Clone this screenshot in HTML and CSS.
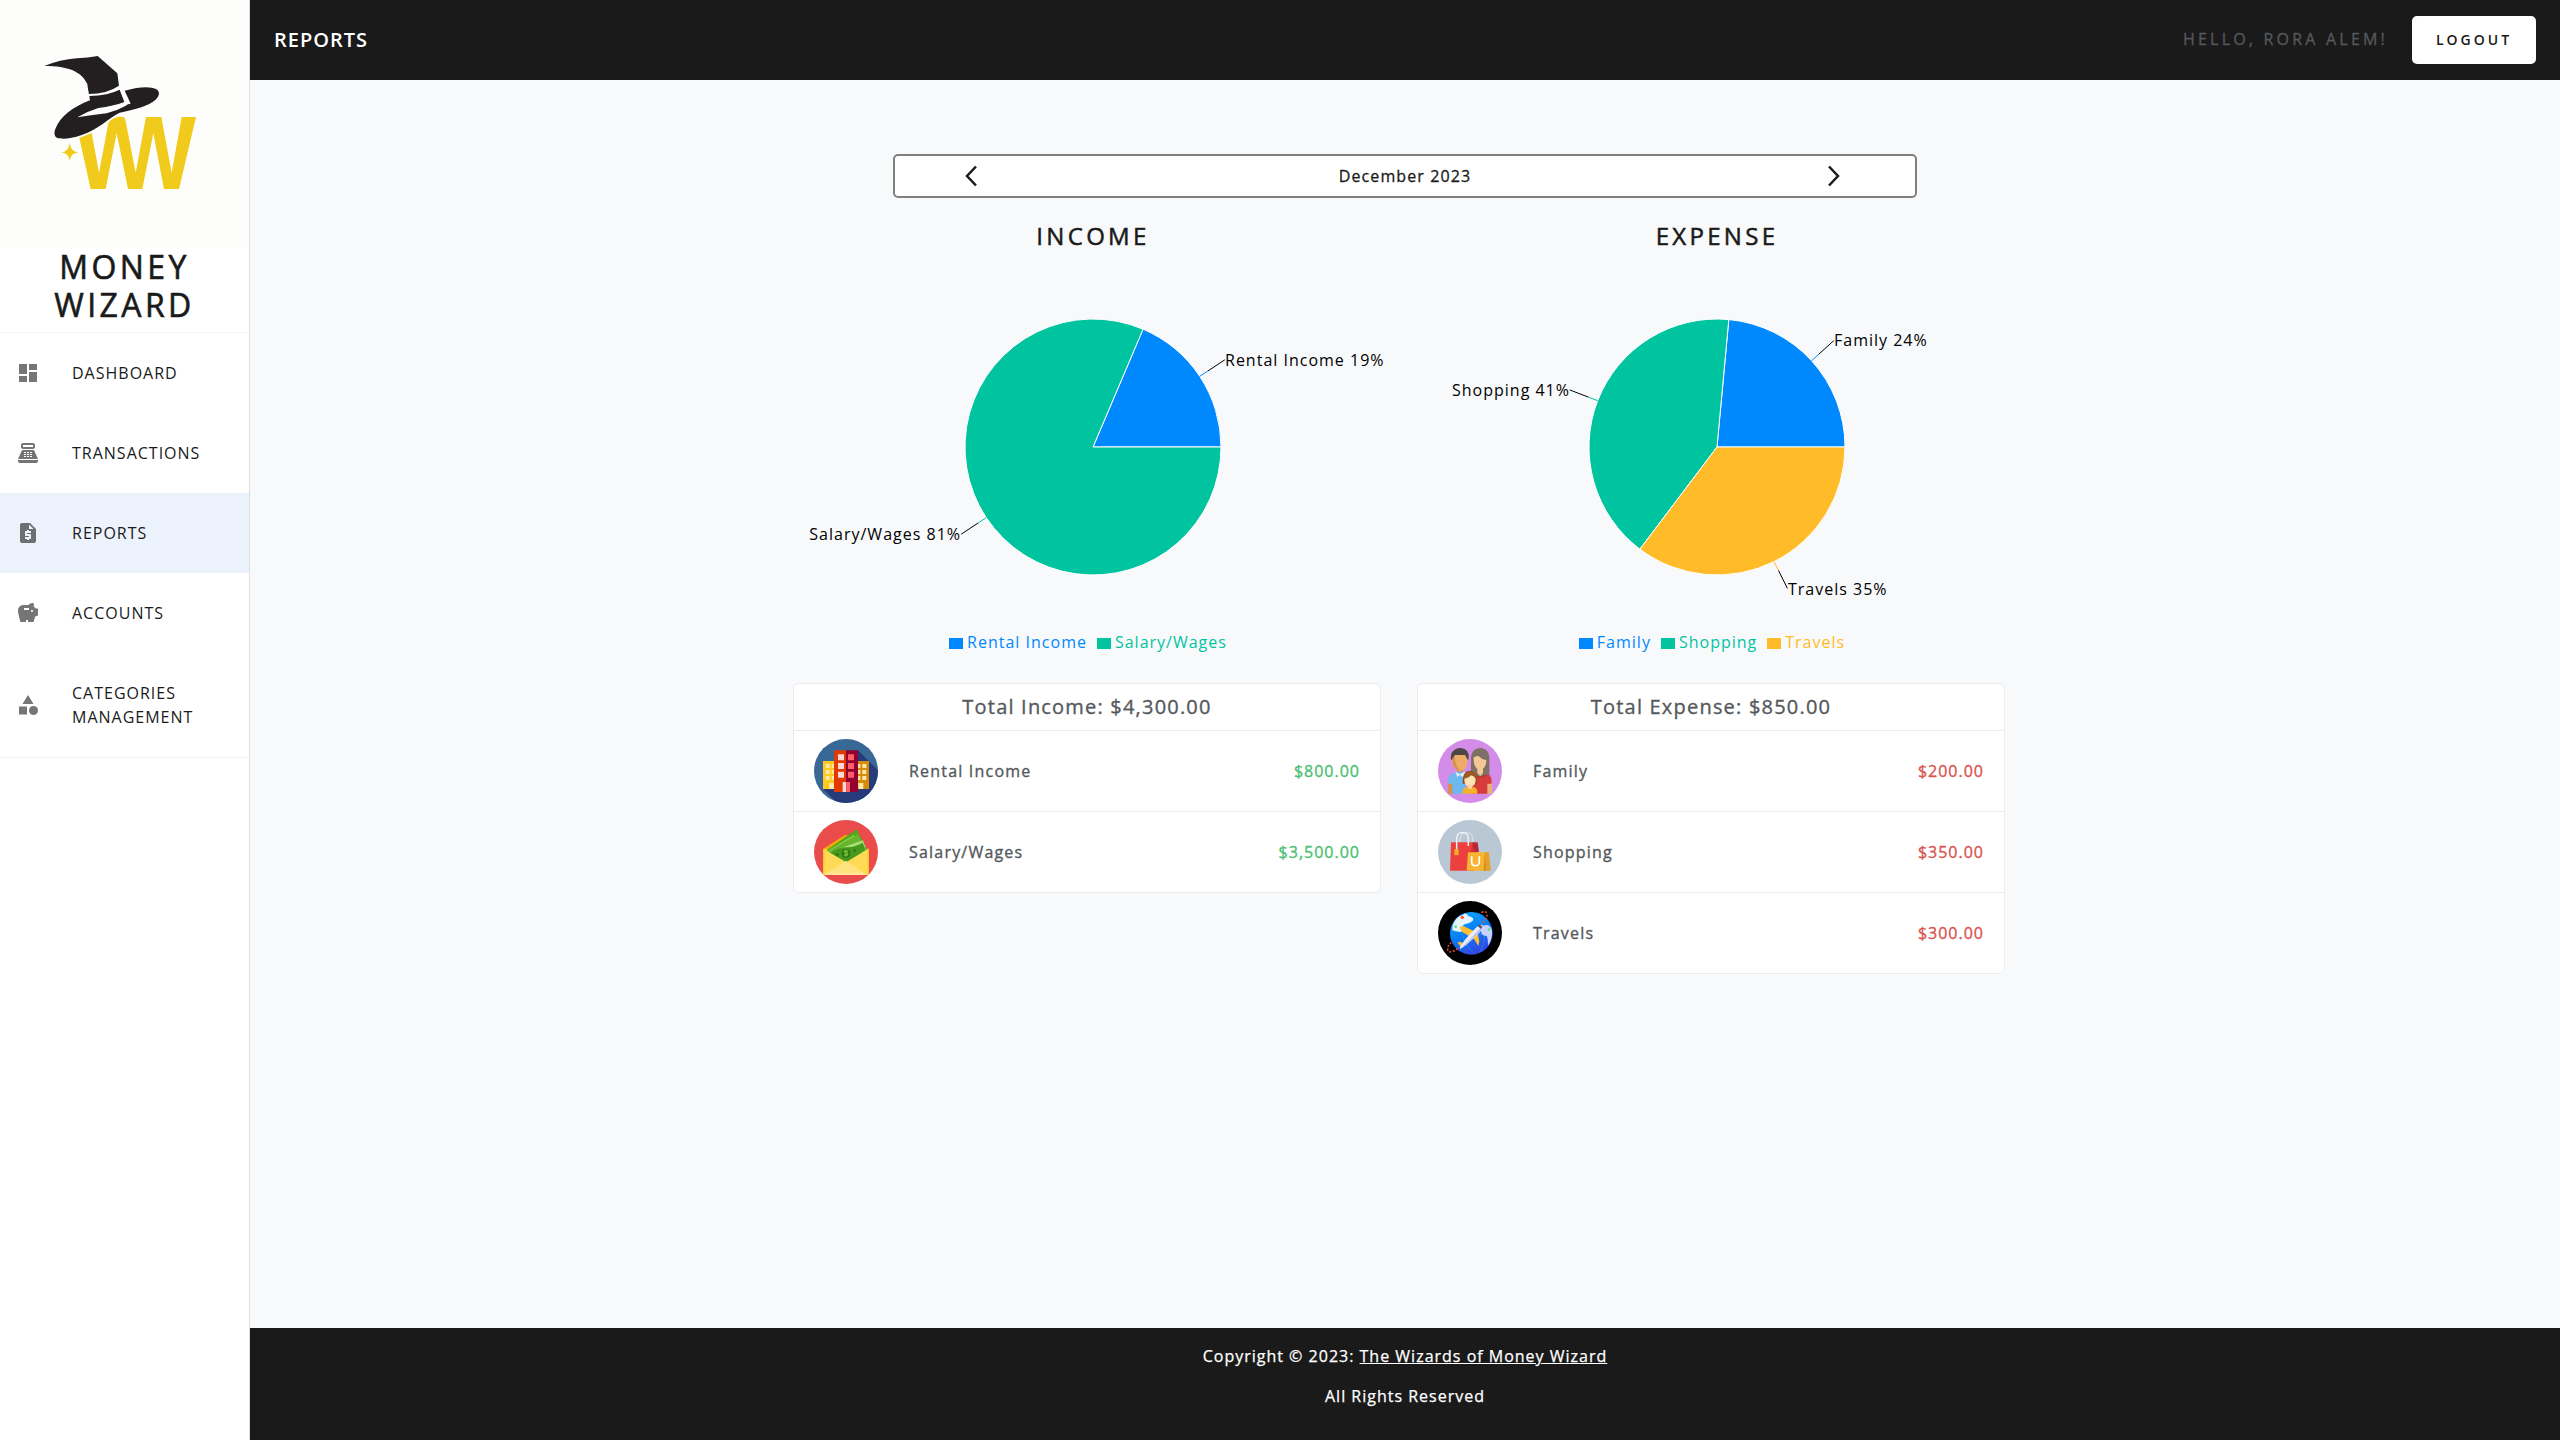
FILE: index.html
```html
<!DOCTYPE html>
<html lang="en">
<head>
<meta charset="utf-8">
<title>Money Wizard - Reports</title>
<link rel="stylesheet" href="styles.css">
</head>
<body>
<aside class="sidebar">
  <svg class="logo" viewBox="0 0 747 744">
    <rect width="747" height="744" fill="#fdfdfc"/>
    <path fill="#231f20" d="M133 198Q180 179 230 175Q265 173 293 168L352 220L357 257Q320 282 267 282Q264 270 262 252C245 215 205 198 133 198Z"/>
    <path fill="#231f20" d="M268 288Q325 286 359 269L373 306Q340 318 295 324Q262 334 232 352Q280 344 320 340Q352 332 376 318L384 313L392 311L374 272Q425 258 455 263C472 266 477 272 477 281C473 305 435 323 359 338C325 355 295 388 245 405C210 418 185 417 172 414C162 409 162 398 166 387C180 350 220 320 270 301Z"/>
    <path fill="#f1cb1b" d="M238 414L275 399L297 518L325 370C335 352 362 345 375 354L407 518L438 351H484L515 518L545 351H588L537 567H492L460 400L427 567H384L350 400L317 567H272ZM209 428Q212 454 235 457Q212 460 209 482Q206 460 184 457Q206 454 209 428Z"/>
  </svg>
  <h1 class="brand">MONEY WIZARD</h1>
  <nav class="nav">
    <a class="nav-item"><svg viewBox="0 0 24 24"><path d="M3 13h8V3H3v10zm0 8h8v-6H3v6zm10 0h8V11h-8v10zm0-18v6h8V3h-8z"/></svg><span>DASHBOARD</span></a>
    <a class="nav-item"><svg viewBox="0 0 24 24"><path fill-rule="evenodd" d="M17 2H7c-1.100 0-2 .9-2 2v2c0 1.100.9 2 2 2h10c1.100 0 2-.9 2-2V4c0-1.100-.9-2-2-2zm0 4H7V4h10v2zm3 16H4c-1.100 0-2-.9-2-2v-1h20v1c0 1.100-.9 2-2 2zm-1.470-11.810C18.210 9.470 17.490 9 16.700 9H7.300c-.79 0-1.510.47-1.830 1.190L2 18h20l-3.470-7.810zM8 11h2v1H8zm0 2h2v1H8zm0 2h2v1H8zm3-4h2v1h-2zm0 2h2v1h-2zm0 2h2v1h-2zm3-4h2v1h-2zm0 2h2v1h-2zm0 2h2v1h-2z"/></svg><span>TRANSACTIONS</span></a>
    <a class="nav-item active"><svg viewBox="0 0 24 24"><path d="M14 2H6c-1.100 0-1.990.9-1.990 2L4 20c0 1.100.89 2 1.990 2H18c1.100 0 2-.9 2-2V8l-6-6zm1 10h-4v1h3c.55 0 1 .45 1 1v3c0 .55-.45 1-1 1h-1v1h-2v-1H9v-2h4v-1h-3c-.55 0-1-.45-1-1v-3c0-.55.45-1 1-1h1V9h2v1h2v2zm-2-4V3.500L17.500 8H13z"/></svg><span>REPORTS</span></a>
    <a class="nav-item"><svg viewBox="0 0 24 24"><path d="M19.830 7.500l-2.270-2.270c.07-.42.18-.81.32-1.150.08-.18.12-.37.12-.58 0-.83-.67-1.500-1.500-1.500-1.640 0-3.090.79-4 2h-5C4.460 4 2 6.460 2 9.500S4.500 21 4.500 21H10v-2h2v2h5.500l1.680-5.590 2.820-.94V7.500h-2.170zM13 9H8V7h5v2zm3 2c-.55 0-1-.45-1-1s.45-1 1-1 1 .45 1 1-.45 1-1 1z"/></svg><span>ACCOUNTS</span></a>
    <a class="nav-item"><svg viewBox="0 0 24 24"><path d="M12 2l-5.500 9h11zM3 13.500h8v8H3z"/><circle cx="17.500" cy="17.500" r="4.500"/></svg><span>CATEGORIES MANAGEMENT</span></a>
  </nav>
</aside>
<div class="page">
  <header class="topbar">
    <h2 class="title">REPORTS</h2>
    <span class="hello">HELLO, RORA ALEM!</span>
    <button class="logout">LOGOUT</button>
  </header>
  <main class="content">
    <div class="month">
      <svg viewBox="0 0 24 24"><path d="M17 2.500L8 12l9 9.500"/></svg>
      <span>December 2023</span>
      <svg viewBox="0 0 24 24"><path d="M7 2.500l9 9.500-9 9.500"/></svg>
    </div>
    <div class="columns">
      <section class="report">
        <h3 class="heading">INCOME</h3>
        <svg class="chart" viewBox="-312 -160 624 320">
          <g class="slices">
            <path fill="#0088fe" d="M0 0L128 0A128 128 0 0 0 50.060 -117.810Z"/>
            <path fill="#00c49f" d="M0 0L50.060 -117.810A128 128 0 1 0 128 0Z"/>
          </g>
          <path stroke="#0088fe" d="M106.700 -70.600L116 -76.800"/>
          <path stroke="#00c49f" d="M-106.700 70.600L-116 76.800"/>
          <path stroke="#000" d="M115 -76.100L131.800 -87.200M-115 76.100L-131.800 87.200"/>
          <text x="132" y="-81">Rental Income 19%</text>
          <text x="-132" y="93" text-anchor="end">Salary/Wages 81%</text>
        </svg>
        <div class="legend">
          <span class="key blue"><i></i>Rental Income</span>
          <span class="key green"><i></i>Salary/Wages</span>
        </div>
        <div class="card">
          <div class="total">Total Income: $4,300.00</div>
          <div class="row">
            <svg viewBox="0 0 192 192"><defs><clipPath id="disc"><circle cx="96" cy="96" r="96"/></clipPath></defs><g clip-path="url(#disc)">
              <path fill="#386895" d="M0 0h192v192H0z"/><path fill="#273a7a" d="M132 34l60 60v98H70L27 150Z"/>
              <path fill="#ffc91f" d="M27 66h34v84H27z"/><path fill="#d78b09" d="M131 66h34v84h-34z"/><path fill="#e03a00" d="M60 34h36v125H60z"/><path fill="#91002e" d="M96 34h36v125H96z"/>
              <path fill="#ffe8a8" d="M35 75h12v12H35zm18 0h7v12h-7zM35 93h12v12H35zm18 0h7v12h-7zM35 111h12v12H35zm18 0h7v12h-7zM45 132h15v18H45zM132 75h7v12h-7zm13 0h12v12h-12zM132 93h7v12h-7zm13 0h12v12h-12zM132 111h7v12h-7zm13 0h12v12h-12zM133 132h15v18h-15z"/>
              <path fill="#ffd5d5" d="M72 46h18v18H72zm0 26h18v18H72zm0 26h18v18H72zM86 129h11v30H86z"/><path fill="#ff5f68" d="M102 46h18v18h-18zm0 26h18v18h-18zm0 26h18v18h-18zM97 129h11v30H97z"/>
            </g></svg>
            <span>Rental Income</span><b class="in">$800.00</b>
          </div>
          <div class="row">
            <svg viewBox="0 0 192 192"><g clip-path="url(#disc)">
              <path fill="#ea4b4b" d="M0 0h192v192H0z"/><path fill="#f6ab00" d="M28 86L94 44l20 6-72 54z"/><path fill="#ffc61b" d="M28 86h136v79H28z"/>
              <path fill="#58a51b" d="M38 90L128 28l32 63-20 30-60 5z"/><path fill="#86d252" d="M38 94L120 45l35 32-12 45-70 4z"/><path fill="#68b52a" d="M39 96L132 43l26 52-55 28z"/><path fill="#a4e277" d="M40 98L147 61l10 30-60 35z"/><path fill="#47981c" d="M45 99Q75 80 104 82Q130 78 146 68L155 90L98 127Z"/>
              <ellipse cx="96" cy="100" rx="13" ry="14" fill="#2d7812"/><path fill="none" stroke="#72bd34" stroke-width="4" d="M102 94q-10-6-11 2 11 3 10 8-5 6-11 0M96 90v20"/><circle cx="122" cy="92" r="4" fill="#2d7812"/><circle cx="70" cy="104" r="4" fill="#2d7812"/>
              <path fill="#ffda55" d="M28 86L96 127L164 86V165H28Z"/><path fill="#ffe895" d="M96 123L160 165H30Z"/><path fill="#ffdd5d" d="M39 158L96 126L154 158Z" opacity=".4"/><path fill="#ffc61b" d="M28 86l3 4v75h-3zM161 90l3-4v79h-3z"/>
            </g></svg>
            <span>Salary/Wages</span><b class="in">$3,500.00</b>
          </div>
        </div>
      </section>
      <section class="report">
        <h3 class="heading">EXPENSE</h3>
        <svg class="chart" viewBox="-312 -160 624 320">
          <g class="slices">
            <path fill="#0088fe" d="M0 0L128 0A128 128 0 0 0 11.820 -127.450Z"/>
            <path fill="#00c49f" d="M0 0L11.820 -127.450A128 128 0 0 0 -77.130 102.150Z"/>
            <path fill="#ffbb28" d="M0 0L-77.130 102.150A128 128 0 0 0 128 0Z"/>
          </g>
          <path stroke="#0088fe" d="M94.600 -86.200L102 -93"/>
          <path stroke="#00c49f" d="M-119.300 -46.300L-128.700 -49.900"/>
          <path stroke="#ffbb28" d="M57 114.600L61.500 123.500"/>
          <path stroke="#000" d="M102 -93L116.800 -106.400M-128.700 -49.900L-147.300 -57.100M61.500 123.500L70.400 141.400"/>
          <text x="117" y="-101">Family 24%</text>
          <text x="-147" y="-51" text-anchor="end">Shopping 41%</text>
          <text x="71" y="147.500">Travels 35%</text>
        </svg>
        <div class="legend">
          <span class="key blue"><i></i>Family</span>
          <span class="key green"><i></i>Shopping</span>
          <span class="key yellow"><i></i>Travels</span>
        </div>
        <div class="card">
          <div class="total">Total Expense: $850.00</div>
          <div class="row">
            <svg viewBox="0 0 192 192"><g clip-path="url(#disc)">
              <path fill="#d38de8" d="M0 0h192v192H0z"/>
              <path fill="#d98f4f" d="M30 125h24v39H30zM57 85h18v20H57z"/><path fill="#e8b17c" d="M138 125h24v39h-24z"/><path fill="#6db8ee" d="M30 130Q30 106 48 102L66 97L84 104V164H43V134H30Z"/><path fill="#d63c3c" d="M98 104L126 98L144 102Q161 106 161 130V134H148V164H98Z"/>
              <path fill="#e5eef3" d="M52 98l14 8 14-8 4 8-10 8-8-6-8 6z"/><path fill="#b92c2c" d="M112 103l14 10 14-10 5 6-10 6h-18z"/>
              <path fill="#4c4745" d="M39 62C36 40 48 28 66 27C86 28 96 42 91 62Z"/><path fill="#edac68" d="M43 60l8-12h30l7 12C90 84 79 96 65 96C50 95 42 82 43 60Z"/><path fill="#d98f4f" d="M43 60l8-10Q50 80 66 96Q44 94 43 60Z"/>
              <path fill="#7f7067" d="M99 108V58C100 37 111 27 127 27C145 28 154 40 154 58V108H136V112H116V108Z"/><path fill="#f3c894" d="M107 55L120 50Q130 60 145 64C145 82 136 92 126 92C114 91 106 79 107 55Z"/><path fill="#f3c894" d="M118 88h17v14l-8 9-9-9z"/>
              <path fill="#8b4b1d" d="M74 134C73 105 82 96 96 95C110 96 119 107 117 134Z"/><ellipse cx="96" cy="124" rx="17" ry="20" fill="#fde2b5"/><path fill="#9e5a21" d="M78 119Q80 97 96 97Q115 99 115 119Q105 110 99 109Q92 118 78 119Z"/><path fill="#fbd49a" d="M90 139h13v12H90z"/><path fill="#f5b32d" d="M73 164Q72 147 86 144Q96 157 106 144Q120 147 118 164Z"/>
            </g></svg>
            <span>Family</span><b class="out">$200.00</b>
          </div>
          <div class="row">
            <svg viewBox="0 0 192 192"><g clip-path="url(#disc)">
              <path fill="#b9c8d4" d="M0 0h192v192H0z"/>
              <path fill="none" stroke="#d6dde2" stroke-width="4" d="M67 68V54C67 32 103 32 104 54V74"/>
              <path fill="#ec403f" d="M39 67h66l5 85H36z"/><path fill="#b52a34" d="M104 67h15l4 30-20 2z"/><path fill="#ce3238" d="M104 67l-6 31h13z"/><path fill="none" stroke="#eef2f5" stroke-width="4.500" d="M56 92V54C57 32 90 32 91 54V78"/>
              <rect x="49" y="87" width="13" height="19" rx="2" fill="#f4a927"/>
              <path fill="#f8b330" d="M90 97h51v55H86z"/><path fill="#e5a027" d="M141 97h12l5 55h-18z"/><path fill="#c98c22" d="M141 97l-4 55h6z"/><path fill="none" stroke="#fff" stroke-width="5" d="M101 109V125Q101 137 112 137Q124 137 124 125V109"/>
            </g></svg>
            <span>Shopping</span><b class="out">$350.00</b>
          </div>
          <div class="row">
            <svg viewBox="0 0 192 192"><defs><linearGradient id="sea" x1="0" y1="0" x2=".5" y2="1"><stop offset="0" stop-color="#0eaefb"/><stop offset=".55" stop-color="#087ff5"/><stop offset="1" stop-color="#3048e5"/></linearGradient></defs><g clip-path="url(#disc)">
              <path d="M0 0h192v192H0z"/><circle cx="100" cy="97" r="64" fill="url(#sea)"/>
              <path fill="none" stroke="#43bffb" stroke-width="1.500" opacity=".6" d="M44 70Q110 130 160 80M65 45Q65 120 110 160M100 33Q165 80 125 155"/>
              <path fill="#e5f4ff" d="M43 88C42 64 58 44 76 41Q82 32 92 46Q106 48 106 57Q96 68 82 69Q72 72 71 83Q80 88 66 93Q52 92 43 88Z"/><path fill="#c5d1ff" d="M129 77Q154 63 162 88Q164 115 150 134Q150 112 146 105Q125 104 129 77Z"/>
              <path fill="#ffbe31" d="M64 79l12-4 31 15 10-3 7 34-3 14-13-21-34-20zM58 124l11-2 7 8-4 12-7-9z"/>
              <path fill="#e9ecfb" d="M66 139Q75 119 116 78Q127 67 134 73Q136 82 124 95Q84 135 66 144Z"/><path fill="#b7c2ef" d="M66 144Q88 128 124 95Q134 84 134 73Q120 92 66 144Z"/><path fill="#555363" d="M118 74l11 10 4-7-8-7z"/>
              <path fill="none" stroke="#f34b30" stroke-width="4.500" stroke-dasharray="6 5" d="M134 65Q148 53 147 39Q144 28 129 35M60 143Q30 161 29 144Q30 130 40 125"/>
              <circle cx="73" cy="49" r="5" fill="#ff4d37"/><circle cx="53" cy="77" r="4" fill="#60dd76"/><circle cx="153" cy="86" r="4" fill="#60dd76"/>
            </g></svg>
            <span>Travels</span><b class="out">$300.00</b>
          </div>
        </div>
      </section>
    </div>
  </main>
  <footer class="footer">
    <p>Copyright © 2023: <a>The Wizards of Money Wizard</a></p>
    <p>All Rights Reserved</p>
  </footer>
</div>
</body>
</html>
```
FILE: styles.css
```css
* { box-sizing: border-box; }
body {
  margin: 0;
  height: 1440px;
  display: grid;
  grid-template-columns: 250px 1fr;
  background: #f8f9fb;
  color: #1a1a1a;
  font: 400 16px/24px "Open Sans", sans-serif;
  letter-spacing: 1px;
}
h1, h2, h3, p { margin: 0; font-weight: 400; }
.sidebar { background: #fff; border-right: 1px solid #dedede; }
.logo { display: block; width: 249px; height: 248px; }
.brand {
  height: 84px;
  padding: 0 40px 7px;
  font-size: 32px;
  line-height: 38.4px;
  letter-spacing: 3.4px;
  text-align: center;
  -webkit-text-stroke: .6px;
}
.nav { border: solid #f3f3f3; border-width: 1px 0; }
.nav-item {
  display: flex;
  align-items: center;
  gap: 32px;
  min-height: 80px;
  padding: 28px 16px;
}
.nav-item svg { flex: none; width: 24px; height: 24px; fill: #757575; }
.active { background: #ecf3fc; }
.active svg { fill: #6d7073; }
.page { display: flex; flex-direction: column; }
.topbar {
  height: 80px;
  padding: 0 24px;
  display: flex;
  align-items: center;
  background: #1a1a1a;
}
.title { flex: 1; color: #fff; font-size: 20px; font-weight: 600; }
.hello {
  margin-right: 24px;
  padding-bottom: 2px;
  color: #55595c;
  letter-spacing: 3.200px;
  line-height: 22px;
  -webkit-text-stroke: .3px;
}
.logout {
  width: 124px;
  height: 48px;
  padding: 0;
  border: 0;
  border-radius: 5px;
  background: #fff;
  color: #1a1a1a;
  font: 600 14px/20px "Open Sans", sans-serif;
  letter-spacing: 3px;
}
.content { flex: 1; padding-top: 74px; }
.month {
  width: 1024px;
  height: 44px;
  margin: 0 auto;
  padding: 0 69px 0 64px;
  display: flex;
  align-items: center;
  justify-content: space-between;
  border: 2px solid #808080;
  border-radius: 5px;
  background: #fff;
  letter-spacing: 1.120px;
  -webkit-text-stroke: .3px;
}
.month span { margin-left: 5px; }
.month svg { width: 24px; height: 24px; fill: none; stroke: #1a1a1a; stroke-width: 2.5; }
.columns {
  width: 1248px;
  margin: 0 auto;
  display: grid;
  grid-template-columns: 1fr 1fr;
  align-items: start;
}
.heading {
  padding-top: 23px;
  height: 89px;
  font-size: 24px;
  line-height: 29px;
  letter-spacing: 3.300px;
  text-align: center;
  -webkit-text-stroke: .5px;
}
.chart { display: block; width: 624px; height: 320px; overflow: visible; }
.slices path { stroke: #fff; stroke-width: 1; }
.chart text { fill: #000; }
.legend { display: flex; justify-content: center; gap: 10px; height: 76px; padding: 23px 10px 0 0; }
.key { display: flex; align-items: center; gap: 4px; height: 24px; }
.key i { width: 14px; height: 10.5px; margin-top: 3px; background: currentColor; }
.blue { color: #0088fe; }
.green { color: #00c49f; }
.yellow { color: #ffbb28; }
.card {
  width: 588px;
  margin-left: 12px;
  border: 1px solid #ececed;
  border-radius: 6px;
  background: #fff;
  color: #55595c;
  -webkit-text-stroke: .35px;
}
.total {
  height: 46px;
  font-size: 20px;
  line-height: 46px;
  letter-spacing: 1.200px;
  text-align: center;
}
.row {
  display: flex;
  align-items: center;
  height: 81px;
  padding: 0 20px;
  border-top: 1px solid #ececed;
}
.row svg { width: 64px; height: 64px; margin-right: 31px; }
.row span { flex: 1; letter-spacing: 1.200px; }
.row b { font-weight: 400; }
.in { color: #4bbf73; }
.out { color: #d9534f; }
.footer {
  height: 112px;
  padding-top: 16px;
  background: #1a1a1a;
  color: #fff;
  text-align: center;
  -webkit-text-stroke: .25px;
}
.footer p { margin-bottom: 16px; }
.footer a { text-decoration: underline; }
```
